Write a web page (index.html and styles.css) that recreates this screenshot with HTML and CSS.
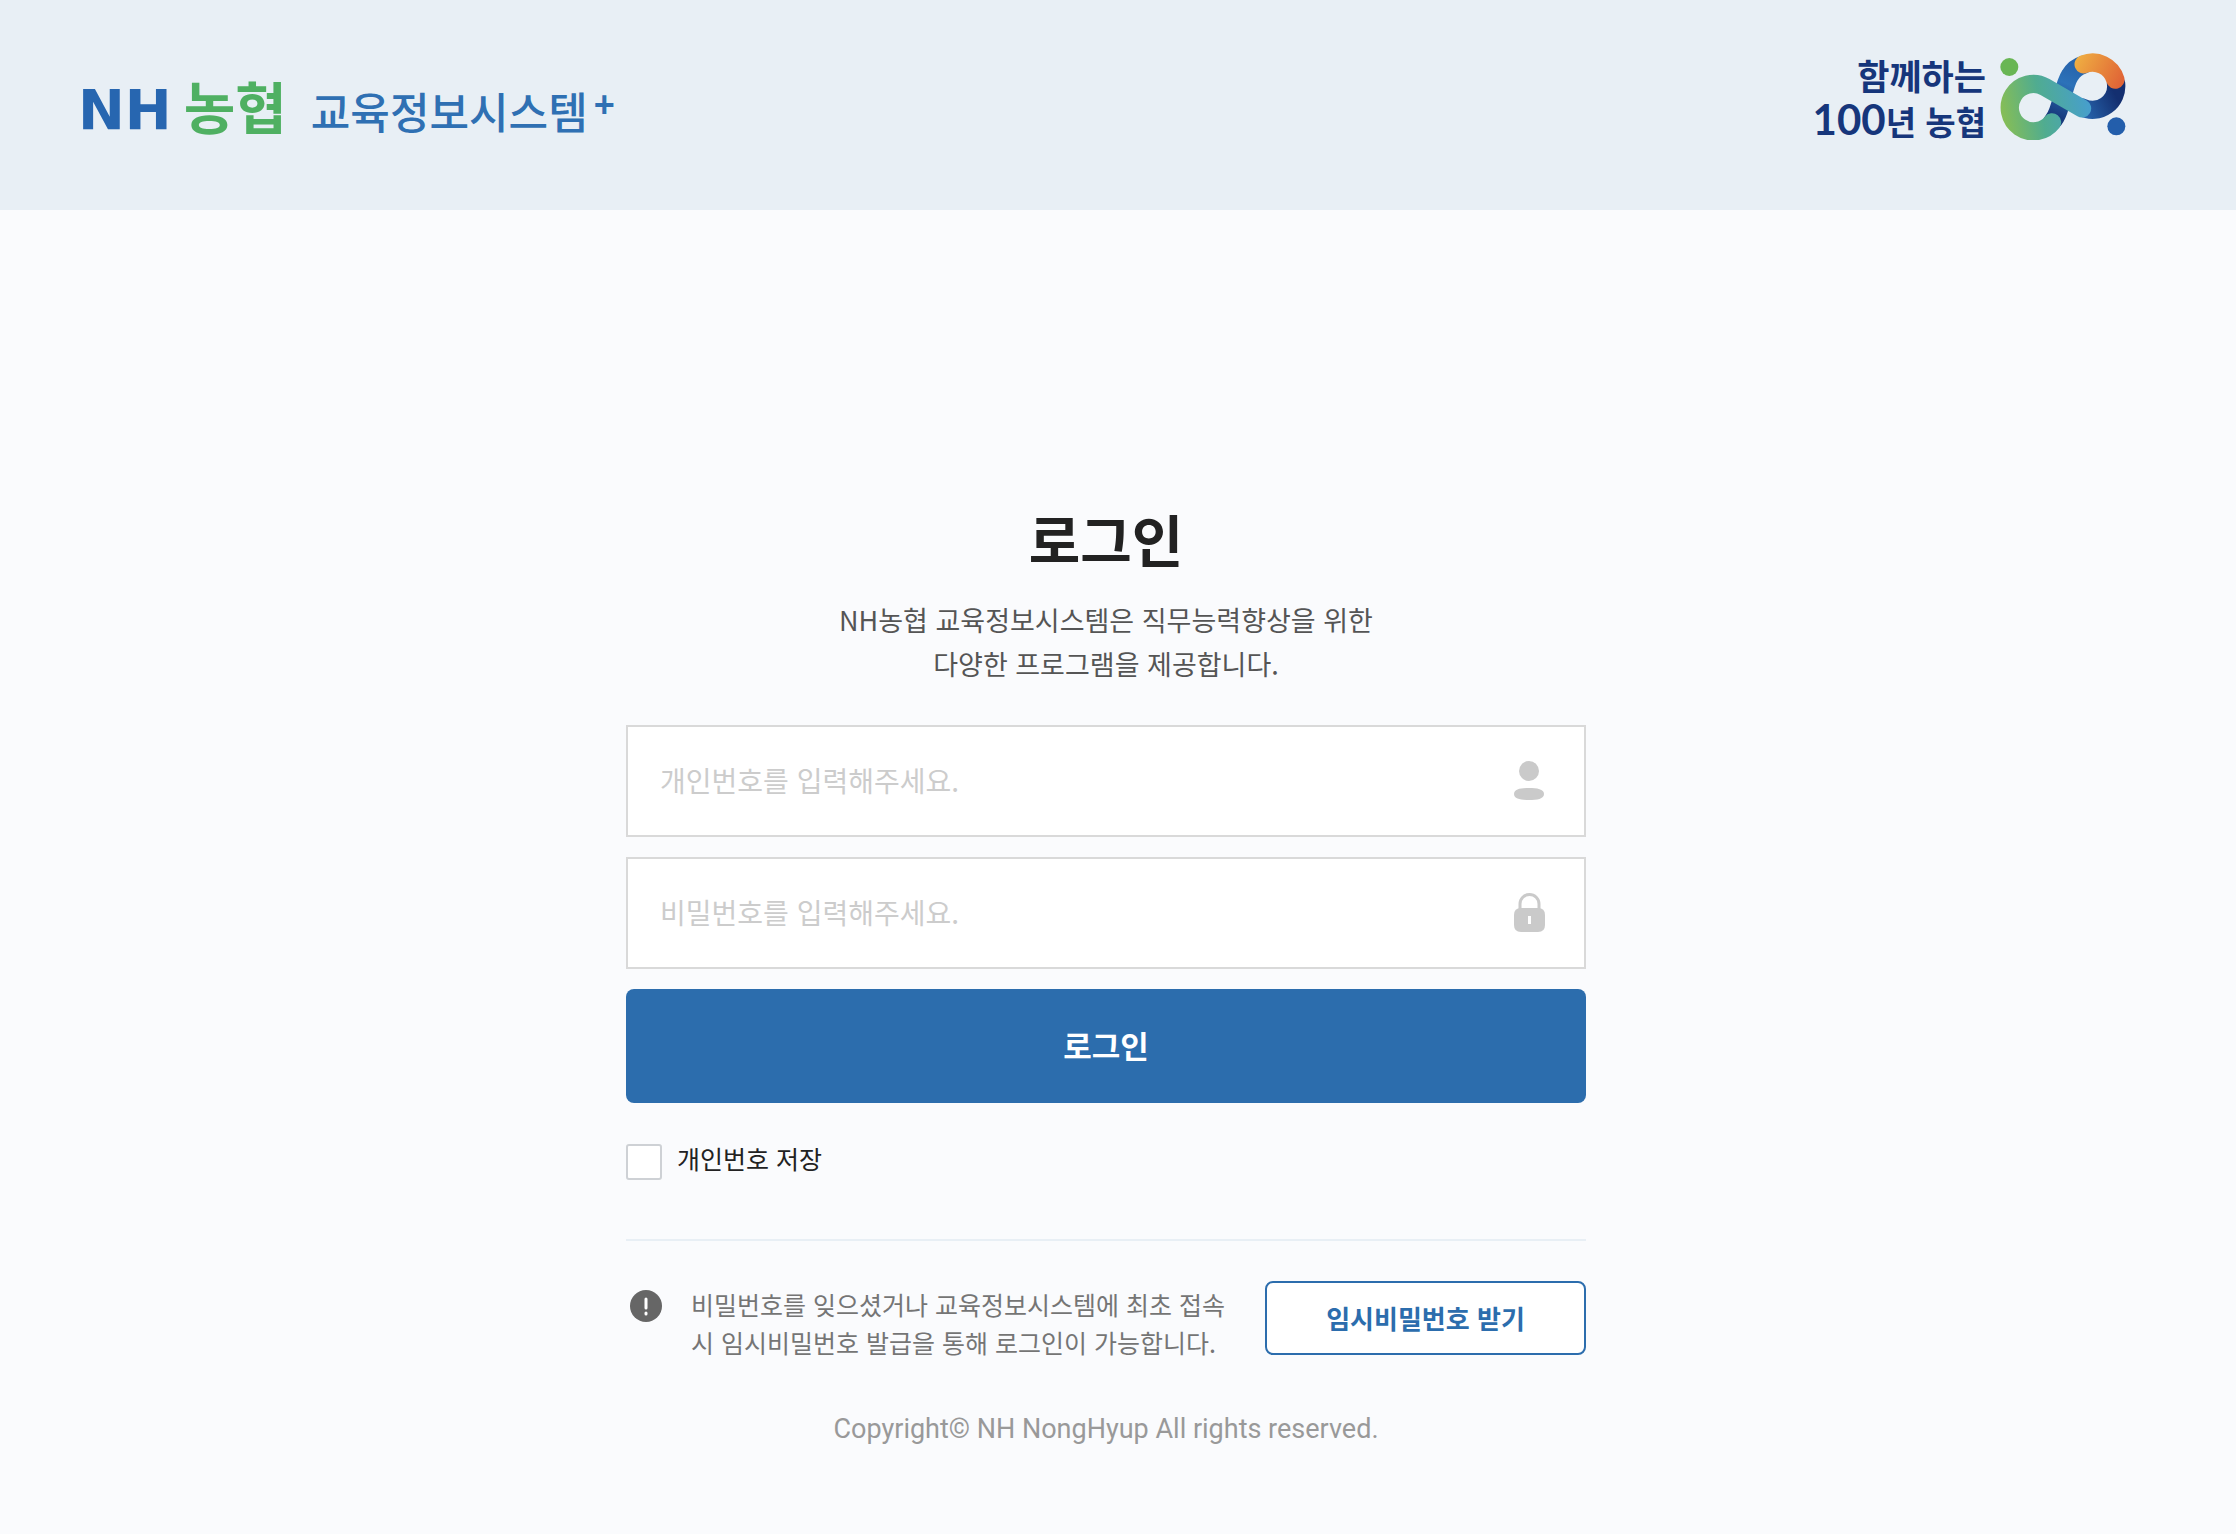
FILE: index.html
```html
<!DOCTYPE html>
<html lang="ko">
<head>
<meta charset="UTF-8">
<meta name="viewport" content="width=device-width, initial-scale=1.0">
<title>NH농협 교육정보시스템 - 로그인</title>
<link rel="stylesheet" href="styles.css">
</head>
<body>

<!-- Header -->
<header class="header">
  <a class="logo" href="#">
    <span class="logo-nh">NH</span>
    <span class="logo-bank">농협</span>
    <span class="logo-system">교육정보시스템</span>
    <span class="logo-plus">+</span>
  </a>
  <div class="slogan">
    <div class="slogan-text">
      <span>함께하는</span>
      <span class="slogan-year"><span class="slogan-num">100</span>년 농협</span>
    </div>
    <svg class="slogan-mark" viewBox="627 70 378 261" aria-hidden="true">
      <defs>
        <linearGradient id="green" gradientUnits="userSpaceOnUse" x1="640" y1="270" x2="890" y2="220">
          <stop offset="0" stop-color="#84bd58"/>
          <stop offset="0.45" stop-color="#50ac90"/>
          <stop offset="1" stop-color="#479fcb"/>
        </linearGradient>
        <linearGradient id="orange" gradientUnits="userSpaceOnUse" x1="855" y1="90" x2="990" y2="160">
          <stop offset="0" stop-color="#efae42"/>
          <stop offset="1" stop-color="#e06436"/>
        </linearGradient>
        <linearGradient id="stem" gradientUnits="userSpaceOnUse" x1="850" y1="110" x2="790" y2="260">
          <stop offset="0" stop-color="#2865ad"/>
          <stop offset="0.35" stop-color="#2c72b9"/>
          <stop offset="1" stop-color="#17397c"/>
        </linearGradient>
        <linearGradient id="navy" gradientUnits="userSpaceOnUse" x1="870" y1="240" x2="970" y2="190">
          <stop offset="0" stop-color="#2865ad"/>
          <stop offset="1" stop-color="#132f70"/>
        </linearGradient>
      </defs>
      <g fill="none" stroke-width="55" stroke-linecap="round">
        <path stroke="url(#stem)" d="M785 274C812 246 814 172 837 137Q851 113 877 105"/>
        <path stroke="url(#navy)" d="M975 160A71 71 0 0 1 873 233"/>
        <path stroke="url(#green)" d="M783 278A71 71 0 1 1 762 172L873 236"/>
        <path stroke="url(#orange)" d="M878 104A71 71 0 0 1 973 150"/>
      </g>
      <circle cx="655" cy="112" r="27" fill="#69b654"/>
      <circle cx="976" cy="290" r="27" fill="#235eab"/>
    </svg>
  </div>
</header>

<!-- Login -->
<main class="login">
  <h1>로그인</h1>
  <p class="login-desc">NH농협 교육정보시스템은 직무능력향상을 위한<br>다양한 프로그램을 제공합니다.</p>

  <form class="login-form">
    <div class="field">
      <input type="text" name="userId" placeholder="개인번호를 입력해주세요." aria-label="개인번호">
      <svg class="field-icon" viewBox="0 0 32 40" aria-hidden="true">
        <circle cx="16" cy="10" r="10"/>
        <path d="M1 33C1 28 8 27 16 27S31 28 31 33S24 39 16 39S1 38 1 33z"/>
      </svg>
    </div>
    <div class="field">
      <input type="password" name="userPw" placeholder="비밀번호를 입력해주세요." aria-label="비밀번호">
      <svg class="field-icon" viewBox="0 0 32 40" aria-hidden="true">
        <path class="shackle" d="M7 18V11a9 9 0 0 1 19 0v7"/>
        <path fill-rule="evenodd" d="M8 15H25Q32 15 32 22V32Q32 39 25 39H8Q1 39 1 32V22Q1 15 8 15zM15 23V31H18V23z"/>
      </svg>
    </div>
    <button class="btn-login" type="button">로그인</button>
    <div class="save-id">
      <input type="checkbox" id="saveId">
      <label for="saveId">개인번호 저장</label>
    </div>
  </form>

  <div class="guide">
    <svg class="guide-icon" viewBox="0 0 34 34" aria-hidden="true">
      <circle cx="17" cy="17" r="16" fill="#666"/>
      <path d="M17 10V19M17 24V25" stroke="#fff" stroke-width="3" stroke-linecap="round"/>
    </svg>
    <p>비밀번호를 잊으셨거나 교육정보시스템에 최초 접속<br>시 임시비밀번호 발급을 통해 로그인이 가능합니다.</p>
    <button class="btn-temp" type="button">임시비밀번호 받기</button>
  </div>

  <p class="copyright">Copyright© NH NongHyup All rights reserved.</p>
</main>

</body>
</html>
```
FILE: styles.css
```css
* {
  box-sizing: border-box;
}

body {
  margin: 0;
  background-color: #fafbfd;
  color: #222;
  font-family: "Noto Sans CJK KR", sans-serif;
}

h1, p {
  margin: 0;
}

input, button {
  font-family: inherit;
}

/* Header */
.header {
  display: flex;
  justify-content: space-between;
  height: 210px;
  padding: 53px 110px 0 78px;
  background-color: #e8eff5;
}

.logo {
  display: flex;
  align-items: baseline;
  height: 104px;
  line-height: 104px;
  color: #2f70b3;
  text-decoration: none;
}

.logo-nh {
  color: #2766b0;
  font-family: "DejaVu Sans", sans-serif;
  font-size: 56px;
  font-weight: bold;
}

.logo-bank {
  margin-left: 12px;
  color: #4fb062;
  font-size: 56px;
  font-weight: bold;
}

.logo-system {
  margin-left: 24px;
  font-size: 43px;
  font-weight: 500;
}

.logo-plus {
  align-self: flex-start;
  margin-left: 6px;
  font-family: "Liberation Sans", sans-serif;
  font-size: 36px;
  font-weight: bold;
}

.slogan {
  display: flex;
  gap: 14px;
}

.slogan-text {
  display: flex;
  flex-direction: column;
  align-items: flex-end;
  color: #16367b;
  font-size: 35px;
  font-weight: bold;
  line-height: 44px;
}

.slogan-year {
  font-size: 33px;
}

.slogan-num {
  font-family: Lato, sans-serif;
  font-size: 42px;
}

.slogan-mark {
  width: 126px;
  height: 87px;
}

/* Login */
.login {
  width: 960px;
  max-width: 100%;
  margin: 0 auto;
  padding-top: 288px;
  position: relative;
  right: 12px;
  text-align: center;
}

h1 {
  font-size: 56px;
  font-weight: bold;
  line-height: 80px;
}

.login-desc {
  margin-top: 20px;
  color: #555;
  font-size: 27px;
  line-height: 44px;
}

.login-form {
  display: flex;
  flex-direction: column;
  gap: 20px;
  margin-top: 39px;
}

.field {
  display: flex;
  align-items: center;
  height: 112px;
  padding: 0 39px 0 32px;
  border: 2px solid #d9d9d9;
  background-color: #fff;
}

.field input {
  flex: 1;
  height: 100%;
  padding: 0 0 2px;
  border: none;
  outline: none;
  background: none;
  font-size: 28px;
}

.field input::placeholder {
  color: #ccc;
}

.field-icon {
  width: 32px;
  height: 40px;
  fill: #cacaca;
}

.shackle {
  fill: none;
  stroke: #cacaca;
  stroke-width: 3;
}

.btn-login {
  height: 114px;
  padding: 0 0 4px;
  border: none;
  border-radius: 8px;
  background-color: #2c6dad;
  color: #fff;
  font-size: 31px;
  font-weight: bold;
  cursor: pointer;
}

.save-id {
  display: flex;
  gap: 15px;
  margin-top: 21px;
  padding-bottom: 59px;
  border-bottom: 2px solid #e8eff5;
}

.save-id input {
  appearance: none;
  width: 36px;
  height: 36px;
  margin: 0;
  border: 2px solid #ced1d5;
  border-radius: 3px;
  background-color: #fff;
}

.save-id label {
  font-size: 25px;
  line-height: 28px;
}

.guide {
  display: flex;
  align-items: flex-start;
  margin-top: 40px;
}

.guide-icon {
  width: 34px;
  height: 34px;
  margin: 8px 28px 0 3px;
}

.guide p {
  padding-top: 4px;
  color: #757575;
  font-size: 25px;
  line-height: 38px;
  text-align: left;
}

.btn-temp {
  width: 321px;
  height: 74px;
  margin-left: auto;
  padding: 0 0 2px;
  border: 2px solid #2c6dad;
  border-radius: 8px;
  background-color: #fff;
  color: #2c6dad;
  font-size: 26px;
  font-weight: bold;
  cursor: pointer;
}

.copyright {
  margin-top: 48px;
  color: #999;
  font-family: Roboto, sans-serif;
  font-size: 27px;
  line-height: 40px;
}
```
